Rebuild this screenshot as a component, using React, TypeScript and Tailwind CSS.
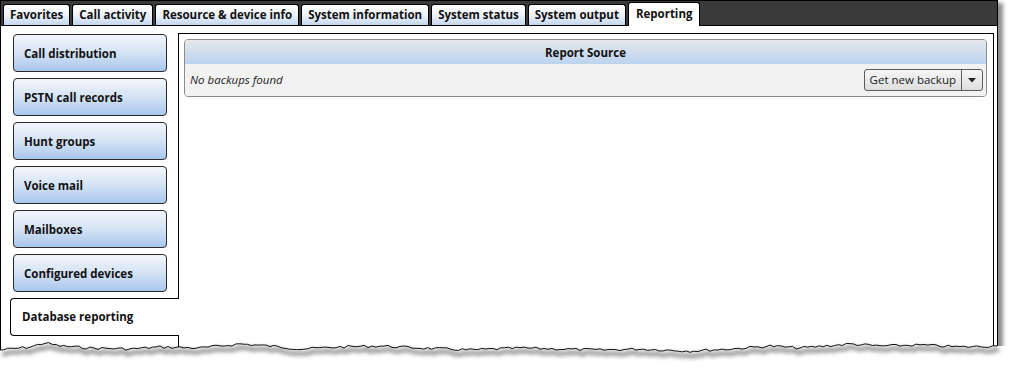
import React from "react";

const FONT = { fontFamily: '"Open Sans", "Noto Sans", "Liberation Sans", sans-serif' };

const topTabs = [
  "Favorites",
  "Call activity",
  "Resource & device info",
  "System information",
  "System status",
  "System output",
];

const sideButtons = [
  "Call distribution",
  "PSTN call records",
  "Hunt groups",
  "Voice mail",
  "Mailboxes",
  "Configured devices",
];

function tornPath(): string {
  const keys: [number, number][] = [
    [0, 20], [30, 17], [45, 13], [60, 16], [90, 18], [130, 19], [160, 17], [200, 18],
    [240, 14], [270, 16], [300, 19], [340, 17], [380, 16], [420, 18], [470, 20],
    [520, 18], [560, 19], [600, 20], [640, 19], [690, 21], [730, 19], [770, 16],
    [800, 18], [850, 14], [880, 16], [920, 15], [960, 17], [997, 16],
  ];
  let seed = 7;
  const rnd = () => {
    seed = (seed * 9301 + 49297) % 233280;
    return seed / 233280;
  };
  const pts: string[] = [];
  for (let i = 0; i < keys.length - 1; i++) {
    const [x0, y0] = keys[i];
    const [x1, y1] = keys[i + 1];
    const steps = Math.max(2, Math.round((x1 - x0) / 4));
    for (let s = 0; s < steps; s++) {
      const t = s / steps;
      const x = x0 + (x1 - x0) * t;
      const y = y0 + (y1 - y0) * t + (rnd() - 0.5) * 2.6;
      pts.push(`${x.toFixed(1)},${y.toFixed(1)}`);
    }
  }
  pts.push(`997,16`);
  return "M" + pts.join(" L");
}

export default function App() {
  const d = tornPath();
  return (
    <div className="relative w-[1014px] h-[369px] bg-white overflow-hidden" style={FONT}>
      <div className="flex flex-col w-[998px] h-[369px] shadow-[5px_3px_4px_rgba(0,0,0,0.45)]">
        {/* top tab strip */}
        <div className="flex items-end gap-[2px] h-[26px] pl-[2px] bg-[#3a3a3a] border-t border-l border-r border-b border-black">
          {topTabs.map((t) => (
            <div
              key={t}
              className="flex items-center h-[21px] px-[6px] border border-b-0 border-black rounded-t-[3px] bg-gradient-to-b from-[#ffffff] via-[#eef3fa] to-[#c4d7ef] text-[11.5px] font-bold text-[#111]"
            >
              {t}
            </div>
          ))}
          <div className="relative z-10 -mb-px flex items-start pt-[2px] h-[24px] px-[7px] border border-b-0 border-black rounded-t-[3px] bg-white text-[11.5px] font-bold text-[#111]">
            Reporting
          </div>
        </div>
        {/* body */}
        <div className="flex flex-1 bg-white border-l border-r border-black pr-[3px] pt-[7px]">
          {/* side column */}
          <div className="flex flex-col w-[177px] pt-[1px] gap-[6px]">
            {sideButtons.map((b) => (
              <div
                key={b}
                className="flex items-center ml-[12px] w-[154px] h-[38px] pl-[10px] pt-[1px] border border-[#2a2a2a] rounded-[4px] bg-gradient-to-b from-[#f2f6fb] via-[#d4e3f5] to-[#a9c7ec] text-[11.5px] font-bold text-[#111]"
              >
                {b}
              </div>
            ))}
            <div className="relative z-10 -mr-px flex items-center ml-[9px] h-[38px] pl-[11px] border border-r-0 border-black rounded-l-[4px] bg-white text-[11.5px] font-bold text-[#111]">
              Database reporting
            </div>
          </div>
          {/* content panel */}
          <div className="flex-1 border border-black pt-[5px] pl-[5px] pr-[6px]">
            <div className="flex flex-col border border-[#8c8c8c] rounded-[4px] overflow-hidden">
              <div className="flex items-center justify-center h-[24px] pt-[1px] bg-gradient-to-b from-[#e6e8ec] to-[#bcd3ee] text-[11.5px] font-bold text-[#111]">
                Report Source
              </div>
              <div className="flex items-center justify-between h-[32px] bg-[#f2f2f2] pl-[5px] pr-[3px]">
                <span className="italic text-[11.5px] text-[#222]">No backups found</span>
                <div className="flex h-[22px] border border-[#5a5a5a] rounded-[3px] bg-gradient-to-b from-[#f6f6f6] to-[#dedede]">
                  <div className="flex items-center px-[5px] text-[11.5px] text-[#222]">Get new backup</div>
                  <div className="flex items-center justify-center w-[21px] border-l border-[#5a5a5a]">
                    <svg width="8" height="5" viewBox="0 0 8 5">
                      <path d="M0 0 L8 0 L4 4.5 Z" fill="#222" />
                    </svg>
                  </div>
                </div>
              </div>
            </div>
          </div>
        </div>
      </div>
      {/* torn bottom edge */}
      <svg className="absolute left-0 top-[330px]" width="1014" height="39" viewBox="0 0 1014 39">
        <defs>
          <filter id="blur" x="-5%" y="-50%" width="110%" height="200%">
            <feGaussianBlur stdDeviation="2" />
          </filter>
        </defs>
        <path d={d + " L1014,16 L1014,39 L0,39 Z"} fill="white" />
        <path d={d} transform="translate(2,4)" fill="none" stroke="rgba(0,0,0,0.45)" strokeWidth="4" filter="url(#blur)" />
        <path d={d} fill="none" stroke="#111" strokeWidth="1" />
      </svg>
    </div>
  );
}
